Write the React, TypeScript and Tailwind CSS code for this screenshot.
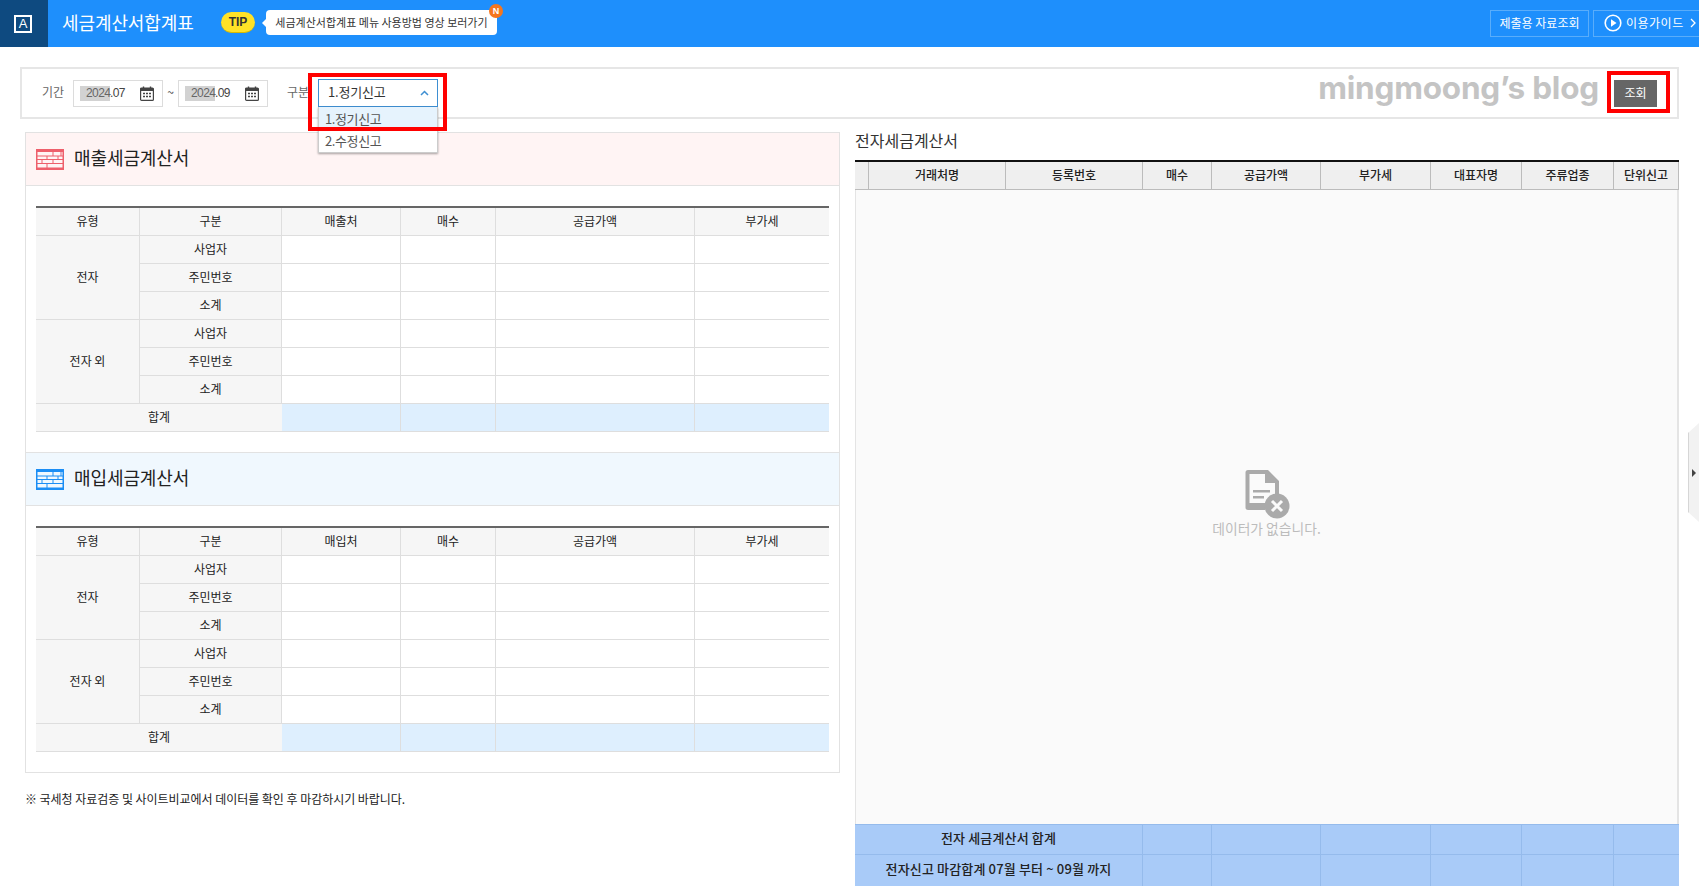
import React from "react";

const KR = "font-['Noto_Sans_CJK_KR','Noto_Sans',sans-serif]";

function Brick({ color }: { color: string }) {
  return (
    <svg width="28" height="21" viewBox="0 0 28 21" fill="none" stroke={color} strokeWidth="1" className="shrink-0">
      <rect x="0.75" y="0.75" width="26.5" height="19.5" strokeWidth="1.5" />
      <rect x="0" y="0" width="28" height="3" fill={color} stroke="none" />
      <rect x="0" y="18.5" width="28" height="2.5" fill={color} stroke="none" />
      <path d="M1 7h26M1 10.500h26M1 14.500h26M17 1v6M25 1v6M11 7v3.500M22 7v3.500M6 10.500v4M17 10.500v4M11 14.500v5" />
    </svg>
  );
}

function Cal() {
  return (
    <svg width="14" height="15" viewBox="0 0 14 15" fill="none" className="shrink-0">
      <rect x="0.6" y="2" width="12.8" height="12.4" rx="1" stroke="#444" strokeWidth="1.2" />
      <rect x="0.6" y="2" width="12.8" height="3" fill="#444" />
      <path d="M3.500 0.500v2M10.500 0.500v2" stroke="#444" strokeWidth="1.4" />
      <path d="M3 7.500h2M6 7.500h2M9 7.500h2M3 10.500h2M6 10.500h2M9 10.500h2" stroke="#444" strokeWidth="1.5" />
    </svg>
  );
}

function DateBox({ value, gap }: { value: string; gap: string }) {
  return (
    <div className="flex items-center w-[90px] h-[27px] border border-[#dcdcdc] pl-[6px] bg-white font-['Liberation_Sans',sans-serif] text-[12px] tracking-[-0.6px] leading-[15px]">
      <span className="bg-[#d2d2d2] text-[#666] pl-[6px] w-[30px] shrink-0">2024</span>
      <span className="text-[#444] w-[15px] shrink-0 whitespace-nowrap">{value}</span>
      <span className={gap}><Cal /></span>
    </div>
  );
}

const cell = "border-r border-[#dedede]";
const line = "border-b border-[#dedede]";

function TaxTable({ party }: { party: string }) {
  const cols = "grid grid-cols-[104px_142px_119px_95px_199px_134px]";
  const gray = "bg-[#f6f6f6]";
  const label = "flex items-center justify-center text-[12px] text-[#222] pb-[2px]";
  const Empty = ({ total, rule }: { total?: boolean; rule?: boolean }) => {
    const bg = total ? "bg-[#deeffe]" : "";
    const b = rule ? line : "";
    return (
      <>
        <div className={`${cell} ${bg} ${b}`} />
        <div className={`${cell} ${bg} ${b}`} />
        <div className={`${cell} ${bg} ${b}`} />
        <div className={`${bg} ${b}`} />
      </>
    );
  };
  const groups = [
    { name: "전자", items: ["사업자", "주민번호", "소계"] },
    { name: "전자 외", items: ["사업자", "주민번호", "소계"] },
  ];
  return (
    <div className="mx-[10px] border-t-2 border-[#666]">
      <div className={`${cols} h-[28px] ${line} ${gray}`}>
        {["유형", "구분", party, "매수", "공급가액"].map((t) => (
          <div key={t} className={`${label} ${cell}`}>{t}</div>
        ))}
        <div className={label}>부가세</div>
      </div>
      {groups.map((g) => (
        <div key={g.name} className={`${cols} grid-rows-[28px_28px_28px]`}>
          <div className={`${label} ${gray} ${cell} ${line} row-span-3`}>{g.name}</div>
          {g.items.map((it) => (
            <React.Fragment key={it}>
              <div className={`${label} ${gray} ${cell} ${line}`}>{it}</div>
              <Empty rule />
            </React.Fragment>
          ))}
        </div>
      ))}
      <div className="grid grid-cols-[246px_119px_95px_199px_134px] h-[28px]">
        <div className={`${label} ${gray} ${line}`}>합계</div>
        <Empty total rule />
      </div>
    </div>
  );
}

const rCols = "grid grid-cols-[14px_137px_137px_69px_109px_110px_91px_92px_65px]";
const fLine = "border-r border-[#95bbec]";

export default function App() {
  return (
    <div className={`${KR} w-[1699px] h-[893px] overflow-hidden bg-white relative`}>
      {/* top bar */}
      <header className="h-[47px] bg-[#1e8ffc] flex items-center">
        <div className="w-[48px] h-full bg-[#0e4a80] flex items-center justify-center shrink-0">
          <div className="w-[18px] h-[18px] border-[2px] border-white flex items-center justify-center text-white text-[13px] leading-none font-['Liberation_Sans',sans-serif] -ml-[2px]">A</div>
        </div>
        <h1 className="ml-[14px] text-white text-[18px] leading-[24px] font-normal w-[159px] -mt-[4px] shrink-0 tracking-[-0.1px]">세금계산서합계표</h1>
        <div className="w-[34px] h-[21px] rounded-full bg-[#ffe227] border-b border-[#d9b900] text-[#333] text-[12px] font-bold leading-[20px] text-center font-['Liberation_Sans',sans-serif] -mt-[2px] shrink-0">TIP</div>
        <div className="relative ml-[11px] -mt-[3px] w-[231px] h-[25px] bg-white rounded-[4px] flex items-center justify-center text-[11px] text-[#333] whitespace-nowrap shrink-0">
          <span className="absolute -left-[4px] top-[9px] w-0 h-0 border-y-[4px] border-y-transparent border-r-[4px] border-r-white" />
          세금계산서합계표 메뉴 사용방법 영상 보러가기
          <span className="absolute -right-[6px] -top-[6px] w-[14px] h-[14px] rounded-full bg-[#f5761e] text-white text-[9px] font-bold leading-[14px] text-center font-['Liberation_Sans',sans-serif]">N</span>
        </div>
        <div className="ml-auto flex gap-[4px] -mt-[1px]">
          <div className="w-[99px] h-[27px] border border-[#59adfb] text-white text-[12px] flex items-center justify-center">제출용 자료조회</div>
          <div className="w-[106px] h-[27px] border border-[#59adfb] border-r-0 text-white text-[12px] flex items-center pl-[10px]">
            <svg width="18" height="18" viewBox="0 0 18 18" className="mr-[4px] shrink-0">
              <circle cx="9" cy="9" r="7.8" fill="none" stroke="white" strokeWidth="1.6" />
              <path d="M7 5.200 12.500 9 7 12.800Z" fill="white" />
            </svg>
            <span className="tracking-[0.5px]">이용가이드</span>
            <svg width="6" height="10" viewBox="0 0 6 10" className="ml-[6px]" fill="none" stroke="white" strokeWidth="1.3"><path d="M1 1l4 4-4 4" /></svg>
          </div>
        </div>
      </header>

      {/* filter */}
      <div className="mt-[20px] ml-[20px] w-[1659px] h-[52px] border-2 border-[#e6e6e6] flex items-center">
        <span className="ml-[20px] text-[12px] text-[#666] w-[31px] -mt-[2px]">기간</span>
        <DateBox value=".07" gap="ml-[15px]" />
        <span className="w-[15px] text-center text-[12px] text-[#444] -mt-[2px]">~</span>
        <DateBox value=".09" gap="ml-[15px]" />
        <span className="ml-[19px] text-[12px] text-[#666] w-[31px] -mt-[2px]">구분</span>
        <div className="w-[120px] h-[28px] border border-[#3e8fd2] flex items-center pl-[9px] pr-[8px] text-[13px] tracking-[-0.2px] text-[#333] bg-white -mt-[1px]">
          <span className="flex-1 pb-[2px]">1.정기신고</span>
          <svg width="9" height="6" viewBox="0 0 9 6" fill="none" stroke="#3e8fd2" strokeWidth="1.5"><path d="M1 5l3.500-3.500L8 5" /></svg>
        </div>
        <span className="ml-auto text-[31.5px] leading-[36px] font-bold text-[#c4c4c4] font-['Inter',sans-serif] -mt-[10px] tracking-[-0.2px]">mingmoong’s blog</span>
        <div className="ml-[15px] mr-[20px] w-[43px] h-[27px] bg-[#666] text-white text-[12px] flex items-center justify-center">조회</div>
      </div>

      {/* dropdown and red markers over the page */}
      <div className="absolute left-[318px] top-[107px] w-[120px] h-[46px] bg-white border border-[#ccc] border-t-0 shadow-[0_1px_2px_rgba(0,0,0,0.35)] text-[13px] tracking-[-0.4px] text-[#555]">
        <div className="h-[23px] bg-[#e6f3fd] pl-[6px] leading-[23px]">1.정기신고</div>
        <div className="h-[22px] pl-[6px] leading-[22px]">2.수정신고</div>
      </div>
      <div className="absolute left-[308px] top-[73px] w-[139px] h-[58px] border-[4px] border-[#f00] pointer-events-none" />
      <div className="absolute left-[1607px] top-[71px] w-[63px] h-[42px] border-[4px] border-[#f00] pointer-events-none" />

      {/* body */}
      <div className="flex items-start mt-[13px]">
        <div className="ml-[25px] w-[815px]">
          <section className="h-[641px] border border-[#e2e2e2]">
            <div className="h-[53px] bg-[#fff4f4] border-b border-[#e2e2e2] flex items-center pl-[10px]">
              <Brick color="#ee5f6b" />
              <h2 className="ml-[10px] text-[18px] tracking-[-0.1px] font-normal text-[#222] -mt-[4px]">매출세금계산서</h2>
            </div>
            <div className="h-[20px]" />
            <TaxTable party="매출처" />
            <div className="h-[20px]" />
            <div className="h-[54px] bg-[#f0f8fe] border-y border-[#e2e2e2] flex items-center pl-[10px]">
              <Brick color="#1b8ef5" />
              <h2 className="ml-[10px] text-[18px] tracking-[-0.1px] font-normal text-[#222] -mt-[4px]">매입세금계산서</h2>
            </div>
            <div className="h-[20px]" />
            <TaxTable party="매입처" />
          </section>
          <p className="mt-[17px] text-[12px] leading-[18px] text-[#222] tracking-[-0.04px]">※ 국세청 자료검증 및 사이트비교에서 데이터를 확인 후 마감하시기 바랍니다.</p>
        </div>

        <div className="ml-[15px] w-[824px] -mt-[3px]">
          <h2 className="text-[16px] font-normal text-[#333] leading-[22px] h-[31px]">전자세금계산서</h2>
          <div className="border-t-[2px] border-[#111]">
            <div className={`${rCols} h-[28px] bg-[#efefef] border-b border-[#bcbcbc] text-[12px] font-medium text-[#222]`}>
              {["", "거래처명", "등록번호", "매수", "공급가액", "부가세", "대표자명", "주류업종", "단위신고"].map((t, i) => (
                <div key={i} className="flex items-center justify-center border-r border-[#bcbcbc] pb-[2px]">{t}</div>
              ))}
            </div>
            <div className="h-[634px] bg-[#fafafa] border-l border-r-2 border-[#e4e4e4] flex flex-col items-center justify-center pb-[8px]">
              <svg width="46" height="50" viewBox="0 0 46 50" className="ml-[2px]">
                <path d="M3 1h20l11 11v22H20v7H3a2.500 2.500 0 0 1-2.500-2.500V3.500A2.500 2.500 0 0 1 3 1Z" fill="#aaa" />
                <path d="M4.500 5h16.500l9 9v20H4.500Z" fill="#fafafa" />
                <path d="M20 1v13h14" fill="#aaa" />
                <path d="M8 21h17v2.500H8ZM8 27h11v2.500H8Z" fill="#aaa" />
                <circle cx="32" cy="37" r="12.5" fill="#aaa" />
                <path d="M27 32l10 10M37 32 27 42" stroke="#fafafa" strokeWidth="3" />
              </svg>
              <span className="text-[13.8px] leading-[18px] text-[#bcbcbc]">데이터가 없습니다.</span>
            </div>
            {["전자 세금계산서 합계", "전자신고 마감합계 07월 부터 ~ 09월 까지"].map((t, idx) => (
              <div key={t} className={`grid grid-cols-[288px_69px_109px_110px_91px_92px_64px] h-[31px] bg-[#a9cbf8] text-[13px] tracking-[0.15px] font-medium text-[#222] ${idx === 0 ? "border-y border-y-[#95bbec]" : ""}`}>
                <div className={`flex items-center justify-center pb-[4px] ${fLine}`}>{t}</div>
                <div className={fLine} />
                <div className={fLine} />
                <div className={fLine} />
                <div className={fLine} />
                <div className={fLine} />
                <div />
              </div>
            ))}
          </div>
        </div>
      </div>

      {/* side handle */}
      <div className="absolute left-[1688px] top-[423px] w-[11px] h-[99px] bg-[#f2f2f2] border-l border-[#d6d6d6] [clip-path:polygon(100%_0,100%_100%,0_90%,0_10%)] flex items-center pl-[3px]">
        <span className="w-0 h-0 border-y-[4px] border-y-transparent border-l-[4px] border-l-[#444]" />
      </div>
    </div>
  );
}
